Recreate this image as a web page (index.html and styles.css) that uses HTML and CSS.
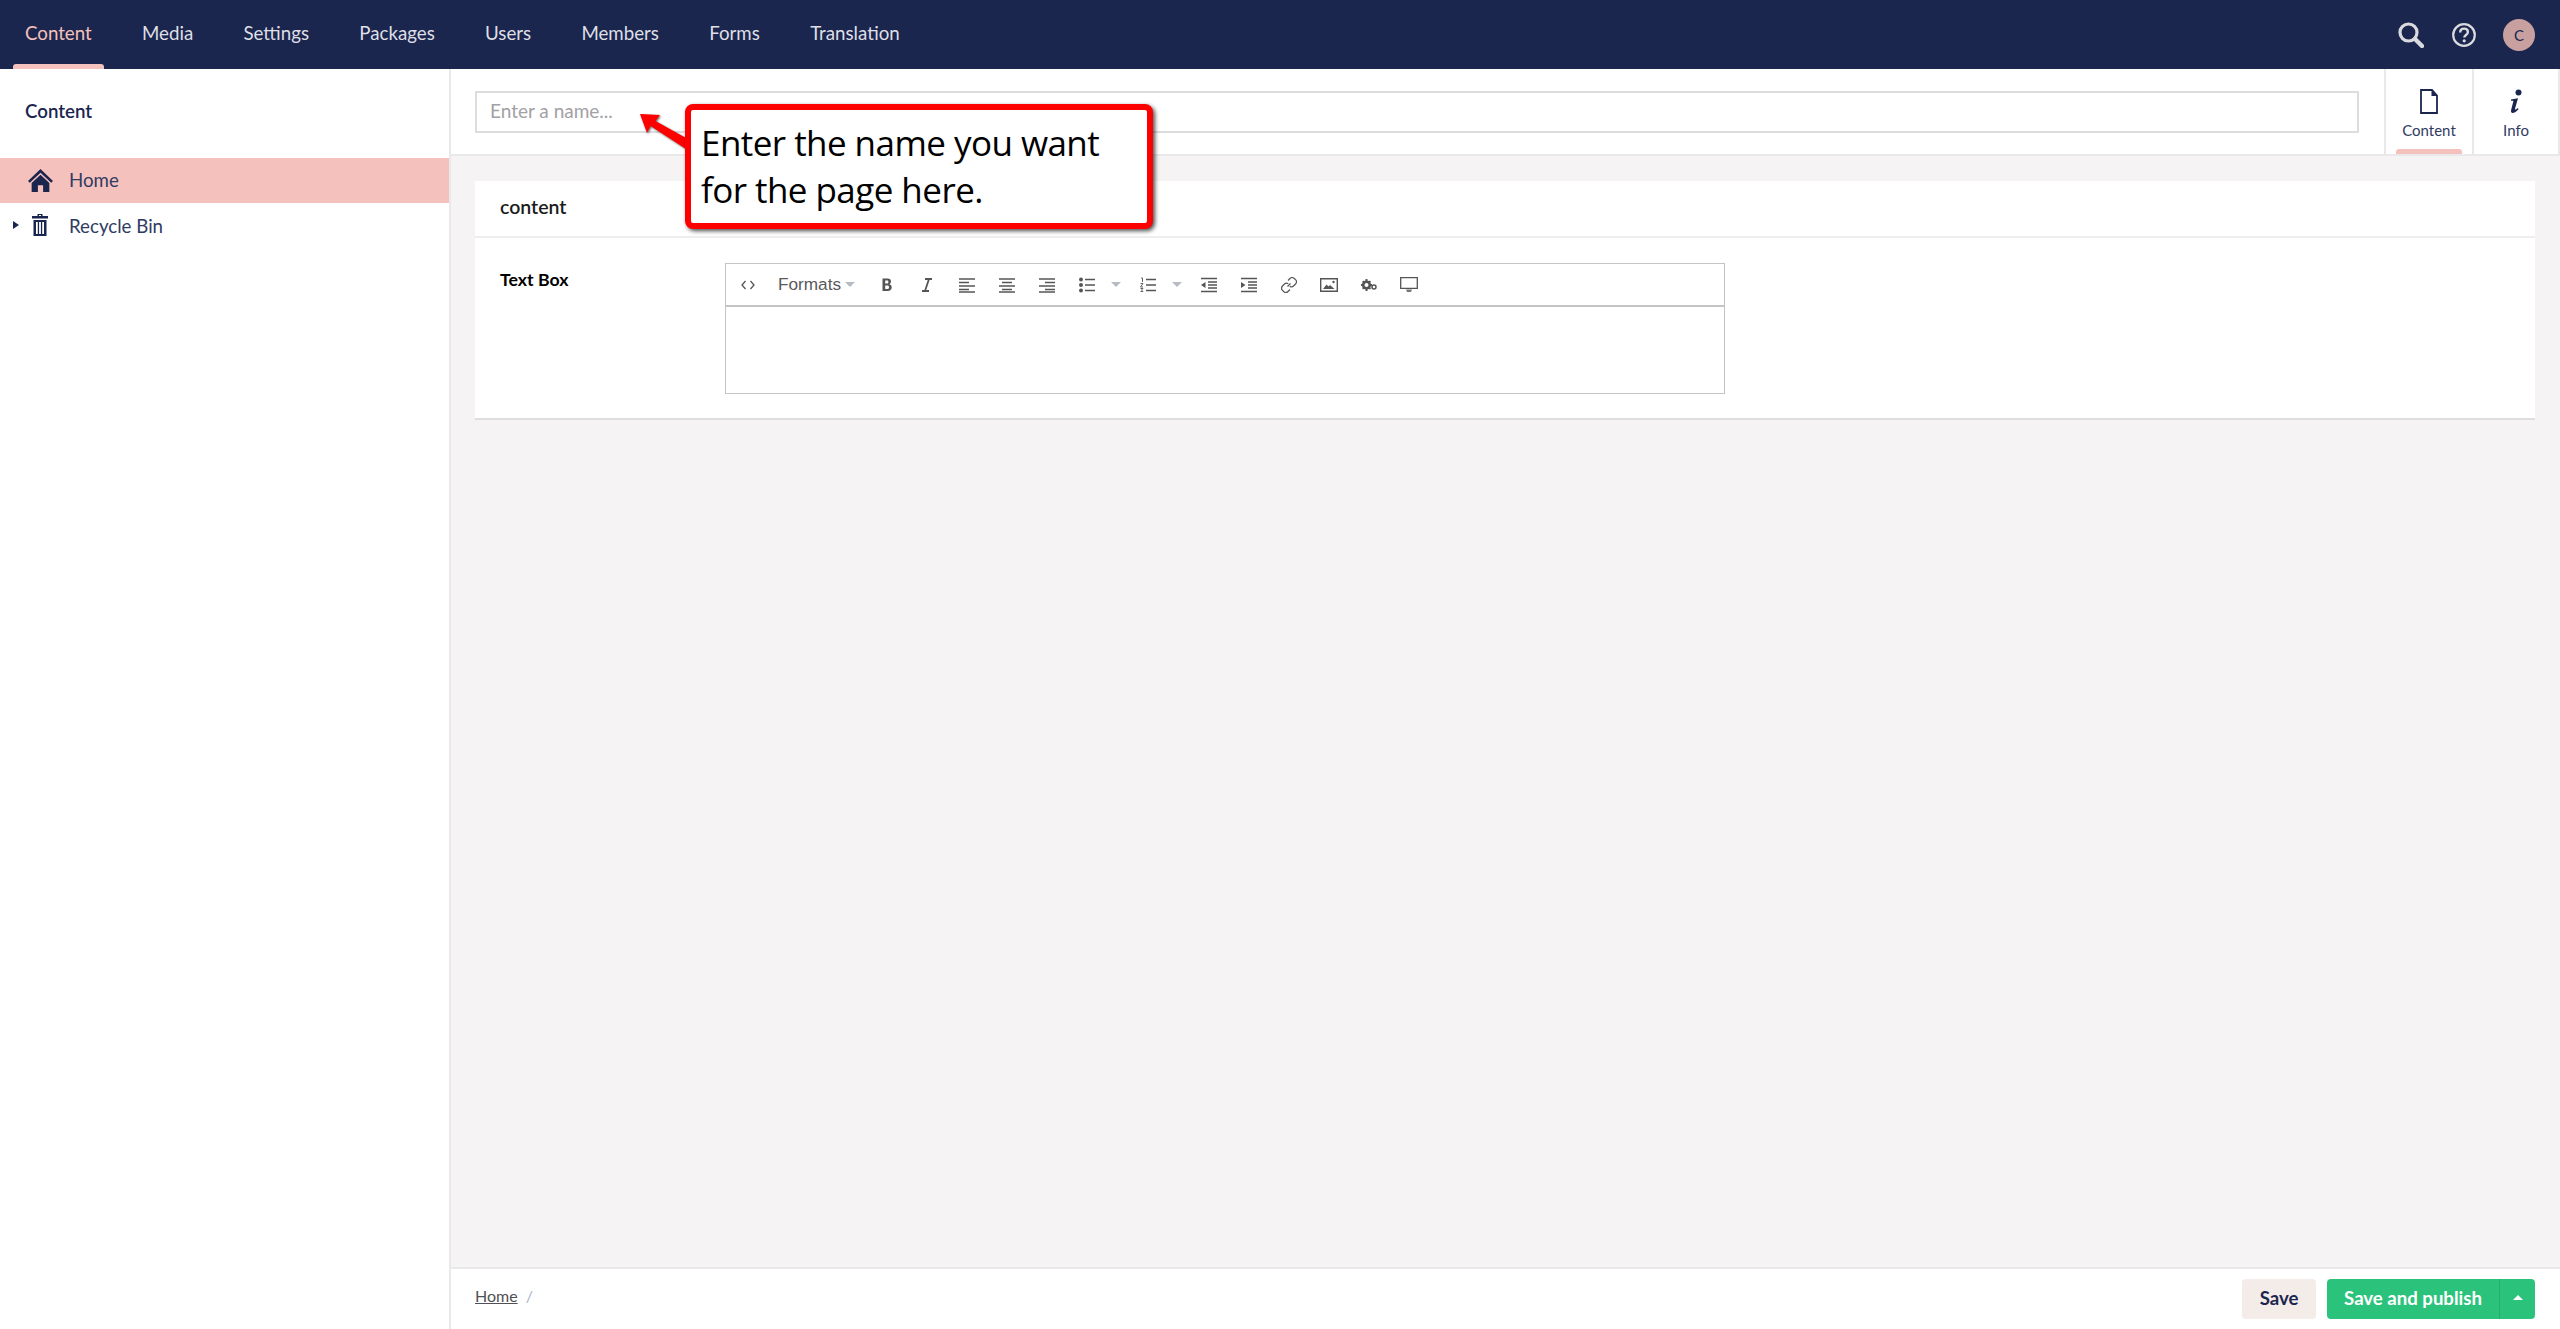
FILE: index.html
```html
<!DOCTYPE html>
<html lang="en">
<head>
    <meta charset="UTF-8">
    <title>Content</title>
    <link rel="stylesheet" href="styles.css">
</head>
<body>
    <header class="topbar">
        <nav class="sections">
            <a class="section active">Content</a>
            <a class="section">Media</a>
            <a class="section">Settings</a>
            <a class="section">Packages</a>
            <a class="section">Users</a>
            <a class="section">Members</a>
            <a class="section">Forms</a>
            <a class="section">Translation</a>
        </nav>
        <div class="top-tools">
            <svg class="tool-search" viewBox="0 0 26 26"><circle cx="10.5" cy="10.5" r="8.5" fill="none" stroke="#d9dade" stroke-width="3.2"/><path d="M17 17l7 7" stroke="#d9dade" stroke-width="4.4" stroke-linecap="round"/></svg>
            <svg class="tool-help" viewBox="0 0 24 24"><circle cx="12" cy="12" r="10.8" fill="none" stroke="#d9dade" stroke-width="2.2"/><path d="M8.2 9.4c0-2.4 1.7-3.8 3.9-3.8s3.8 1.3 3.8 3.4c0 3-3.6 3-3.6 5.6" fill="none" stroke="#d9dade" stroke-width="2.4"/><circle cx="12.2" cy="17.8" r="1.6" fill="#d9dade"/></svg>
            <div class="avatar">C</div>
        </div>
    </header>

    <div class="app">
        <aside class="tree">
            <h3 class="tree-title">Content</h3>
            <div class="tree-row selected">
                <svg class="tree-home" viewBox="0 0 24 22"><path d="M12 0L0 11.500l1.700 1.700L12 3.500l10.300 9.700 1.700-1.700zM12 5.500L3.500 13.500V22h6v-6.500h5V22h6v-8.500z" fill="#1b264f"/></svg>
                <span>Home</span>
            </div>
            <div class="tree-row">
                <span class="tree-caret"></span>
                <svg class="tree-bin" viewBox="0 0 16 22"><path d="M5.500 2V0h5v2H16v2.500H0V2zM7 1v1h2V1zM1.500 6h13v16h-13zM4 8v12h1.800V8zm3.100 0v12h1.800V8zm3.100 0v12H12V8z" fill="#1b264f" fill-rule="evenodd"/></svg>
                <span>Recycle Bin</span>
            </div>
        </aside>

        <main class="editor">
            <div class="editor-head">
                <div class="name-wrap">
                    <input class="name-input" type="text" placeholder="Enter a name...">
                </div>
                <div class="tab active">
                    <svg class="tab-icon" viewBox="0 0 18 25"><path d="M1 1h11l5 5.500V24H1z" fill="#fff" stroke="#1b264f" stroke-width="1.800"/><path d="M11.500 1v6H17z" fill="#1b264f"/></svg>
                    <span>Content</span>
                </div>
                <div class="tab">
                    <svg class="tab-icon" viewBox="0 0 18 25"><circle cx="11.500" cy="3.500" r="3" fill="#1b264f"/><path d="M4 10.500l7-1.200-3 10.500c-.3 1.200.6 1.200 2.800-.8l.7.900C8.500 24 3.500 25.800 4 21.500l2.300-9c.2-1-.8-.8-2.200-.6z" fill="#1b264f"/></svg>
                    <span>Info</span>
                </div>
            </div>

            <div class="editor-body">
                <section class="panel">
                    <div class="panel-head">content</div>
                    <div class="panel-row">
                        <label class="field-label">Text Box</label>
                        <div class="rte">
                            <div class="rte-bar">
                                <span class="btn"><svg class="ico" viewBox="0 0 16 16"><path d="M5.500 4L2 8l3.500 4M10.500 4L14 8l-3.500 4" fill="none" stroke="#555" stroke-width="1.300"/></svg></span>
                                <span class="formats">Formats<i class="caret"></i></span>
                                <span class="btn"><svg class="ico" viewBox="0 0 16 16"><path d="M3.500 1.500h5.300c2 0 3.200 1 3.200 3 0 1.200-.6 2.200-1.600 2.700 1.400.4 2.300 1.500 2.300 3.100 0 2.600-1.700 3.700-3.900 3.700H3.500zM6.200 3.500v3h2c.8 0 1.200-.6 1.200-1.500s-.4-1.500-1.200-1.500zm0 5v3.500h2.300c1 0 1.500-.7 1.500-1.800S9.500 8.500 8.500 8.500z" fill="#555" fill-rule="evenodd"/></svg></span>
                                <span class="btn"><svg class="ico" viewBox="0 0 16 16"><path d="M6 2h7M3 14h7M10 2L6 14" fill="none" stroke="#555" stroke-width="1.800"/></svg></span>
                                <span class="btn"><svg class="ico" viewBox="0 0 16 16"><path d="M0 2h16M0 5.500h10M0 9h16M0 12.500h10M0 15h16" stroke="#555" stroke-width="1.600"/></svg></span>
                                <span class="btn"><svg class="ico" viewBox="0 0 16 16"><path d="M0 2h16M3 5.500h10M0 9h16M3 12.500h10M0 15h16" stroke="#555" stroke-width="1.600"/></svg></span>
                                <span class="btn"><svg class="ico" viewBox="0 0 16 16"><path d="M0 2h16M6 5.500h10M0 9h16M6 12.500h10M0 15h16" stroke="#555" stroke-width="1.600"/></svg></span>
                                <span class="btn"><svg class="ico" viewBox="0 0 16 16"><circle cx="2" cy="2.500" r="2" fill="#555"/><circle cx="2" cy="8" r="2" fill="#555"/><circle cx="2" cy="13.500" r="2" fill="#555"/><path d="M6 2.500h10M6 8h10M6 13.500h10" stroke="#555" stroke-width="1.700"/></svg></span>
                                <span class="btn-caret"><i class="caret"></i></span>
                                <span class="btn"><svg class="ico" viewBox="0 0 16 16"><path d="M1 1h1.500v4M.5 6.500h2.500L.5 10h2.500M.5 11.500h2.500L1.500 13l1.500 1.500H.5" fill="none" stroke="#555" stroke-width=".9"/><path d="M6 2.500h10M6 8h10M6 13.500h10" stroke="#555" stroke-width="1.700"/></svg></span>
                                <span class="btn-caret"><i class="caret"></i></span>
                                <span class="btn"><svg class="ico" viewBox="0 0 16 16"><path d="M0 1.500h16M7 5h9M7 8h9M7 11h9M0 14.500h16" stroke="#555" stroke-width="1.600"/><path d="M4.500 5v6L0 8z" fill="#555"/></svg></span>
                                <span class="btn"><svg class="ico" viewBox="0 0 16 16"><path d="M0 1.500h16M7 5h9M7 8h9M7 11h9M0 14.500h16" stroke="#555" stroke-width="1.600"/><path d="M0 5v6l4.500-3z" fill="#555"/></svg></span>
                                <span class="btn"><svg class="ico" viewBox="0 0 16 16"><path d="M6.500 9.500l3-3M7 3.500l2-2c1.200-1.200 3-1.200 4.300 0l1.200 1.200c1.200 1.200 1.200 3 0 4.300l-2 2c-1 1-2.600 1.100-3.700.2M9 12.500l-2 2c-1.200 1.200-3 1.200-4.300 0l-1.200-1.200c-1.200-1.200-1.200-3 0-4.300l2-2c1-1 2.600-1.100 3.700-.2" fill="none" stroke="#555" stroke-width="1.200"/></svg></span>
                                <span class="btn"><svg class="ico-wide" viewBox="0 0 18 14"><path d="M.7.700h16.600v12.600H.7z" fill="none" stroke="#555" stroke-width="1.400"/><path d="M3 11l3.500-4.500 2 2 1.500-1.500 4.500 4z" fill="#555"/><circle cx="13.500" cy="4" r="1.200" fill="#555"/></svg></span>
                                <span class="btn"><svg class="ico" viewBox="0 0 16 16"><circle cx="5.500" cy="8" r="3.300" fill="none" stroke="#555" stroke-width="2.600"/><path d="M5.500 2v2M5.500 12v2M0 8h2M9 8h2M1.700 4.200l1.400 1.400M8 10.500l1.400 1.400M1.700 11.800l1.400-1.400M8 5.500l1.400-1.400" stroke="#555" stroke-width="2"/><circle cx="13" cy="10" r="2" fill="none" stroke="#555" stroke-width="1.500"/></svg></span>
                                <span class="btn"><svg class="ico-wide" viewBox="0 0 18 16"><path d="M.7.700h16.600v10.600H.7z" fill="none" stroke="#555" stroke-width="1.300"/><path d="M6 12.500h6l-1 2.500H7z" fill="#777"/></svg></span>
                            </div>
                            <div class="rte-body"></div>
                        </div>
                    </div>
                </section>
            </div>

            <footer class="editor-foot">
                <div class="crumbs"><a class="crumb">Home</a><span class="crumb-sep">/</span></div>
                <div class="actions">
                    <button class="btn-save">Save</button>
                    <div class="publish">
                        <button class="btn-publish">Save and publish</button>
                        <button class="btn-more"><i class="caret-up"></i></button>
                    </div>
                </div>
            </footer>
        </main>
    </div>

    <!-- annotation drawn on top of the screenshot -->
    <svg class="callout-arrow" viewBox="0 0 60 45"><path d="M0 1L20 2l-4.500 6L46 25v11L10.500 13 7 20z" fill="#f00"/></svg>
    <div class="callout">Enter the name you want for the page here.</div>
</body>
</html>
```

FILE: styles.css
```css
* {
    margin: 0;
    padding: 0;
    box-sizing: border-box;
}

body {
    font-family: Lato, Arial, sans-serif;
    font-size: 16px;
    color: #1b264f;
    height: 100vh;
    display: flex;
    flex-direction: column;
    overflow: hidden;
    background: white;
}

svg {
    display: block;
}

/* top bar */
.topbar {
    height: 69px;
    background: #1b264f;
    display: flex;
    justify-content: space-between;
    flex-shrink: 0;
}

.sections {
    display: flex;
    padding-left: 13px;
}

.section {
    position: relative;
    padding: 0 12px;
    margin-right: 26.3px;
    line-height: 66px;
    font-size: 18.7px;
    color: #dfdfe5;
}

.section.active {
    color: #f5c1bc;
}

.section.active::after {
    content: "";
    position: absolute;
    left: 0;
    right: 0;
    bottom: 0;
    height: 5px;
    background: #f5c1bc;
    border-radius: 3px 3px 0 0;
}

.top-tools {
    display: flex;
    align-items: center;
    padding-right: 25px;
}

.tool-search {
    width: 26px;
    height: 26px;
    margin-right: 28px;
}

.tool-help {
    width: 24px;
    height: 24px;
    margin-right: 27px;
}

.avatar {
    width: 32px;
    height: 32px;
    border-radius: 50%;
    background: #c9a0a0;
    color: #1b264f;
    font-size: 15px;
    line-height: 32px;
    text-align: center;
}

/* layout */
.app {
    flex: 1;
    display: flex;
    min-height: 0;
}

.tree {
    width: 451px;
    flex-shrink: 0;
    border-right: 2px solid #e9e9eb;
}

.tree-title {
    font-size: 18.7px;
    font-weight: 600;
    line-height: 22px;
    padding: 31px 0 36px 25px;
}

.tree-row {
    position: relative;
    height: 45px;
    display: flex;
    align-items: center;
    padding-left: 69px;
    font-size: 18.7px;
    color: #303b63;
}

.tree-row.selected {
    background: #f5c1bc;
    padding-bottom: 2px;
}

.tree-home {
    position: absolute;
    left: 28px;
    top: 11px;
    width: 25px;
    height: 23px;
}

.tree-bin {
    position: absolute;
    left: 32px;
    top: 11px;
    width: 16px;
    height: 22px;
}

.tree-caret {
    position: absolute;
    left: 13px;
    top: 18px;
    border-left: 6px solid #1b264f;
    border-top: 4px solid transparent;
    border-bottom: 4px solid transparent;
}

.editor {
    flex: 1;
    display: flex;
    flex-direction: column;
    min-width: 0;
    background: #f5f3f4;
}

/* name + tabs */
.editor-head {
    height: 87px;
    background: white;
    border-bottom: 2px solid #e9e9eb;
    display: flex;
    flex-shrink: 0;
}

.name-wrap {
    flex: 1;
    padding: 22px 25px 0 24px;
}

.name-input {
    width: 100%;
    height: 42px;
    padding: 0 13px 4px;
    border: 2px solid #dddcde;
    font-family: inherit;
    font-size: 19px;
    outline: none;
}

.name-input::placeholder {
    color: #a2a1a6;
}

.tab {
    position: relative;
    width: 88px;
    border-left: 2px solid #e9e9eb;
    display: flex;
    flex-direction: column;
    align-items: center;
    padding-top: 20px;
    font-size: 15px;
    color: #303b63;
}

.tab:last-child {
    border-right: 2px solid #e9e9eb;
}

.tab-icon {
    width: 18px;
    height: 25px;
    margin-bottom: 7px;
}

.tab.active::after {
    content: "";
    position: absolute;
    left: 10px;
    right: 10px;
    bottom: 0;
    height: 5px;
    background: #f5c1bc;
    border-radius: 3px 3px 0 0;
}

/* content panel */
.editor-body {
    flex: 1;
    padding: 25px 25px 0 24px;
}

.panel {
    background: white;
    border-bottom: 2px solid #dedede;
    height: 239px;
}

.panel-head {
    height: 57px;
    padding-left: 25px;
    line-height: 52px;
    font-size: 19.5px;
    font-weight: 600;
    color: #1b1b1b;
    border-bottom: 2px solid #eeeeee;
}

.panel-row {
    display: flex;
    padding: 25px 0 0 25px;
}

.field-label {
    width: 225px;
    flex-shrink: 0;
    font-size: 17.7px;
    font-weight: 700;
    line-height: 22px;
    color: black;
    padding-top: 6px;
}

/* rich text editor */
.rte {
    width: 1000px;
    border: 1px solid #c4c4c4;
}

.rte-bar {
    height: 43px;
    display: flex;
    align-items: center;
    padding-left: 2px;
    border-bottom: 2px solid #c4c4c4;
}

.rte-body {
    height: 86px;
}

.btn {
    width: 40px;
    height: 100%;
    display: flex;
    align-items: center;
    justify-content: center;
}

.btn-caret {
    width: 21px;
    display: flex;
    align-items: center;
}

.ico {
    width: 16px;
    height: 16px;
}

.ico-wide {
    width: 18px;
    height: 16px;
}

.formats {
    display: flex;
    align-items: center;
    width: 99px;
    padding-left: 10px;
    font-family: "Liberation Sans", Arial, sans-serif;
    font-size: 17.2px;
    color: #595959;
}

.caret {
    display: inline-block;
    margin-left: 4px;
    border-top: 5px solid #b7bcc2;
    border-left: 5px solid transparent;
    border-right: 5px solid transparent;
}

/* footer */
.editor-foot {
    height: 62px;
    flex-shrink: 0;
    background: white;
    border-top: 2px solid #e9e9eb;
    display: flex;
    justify-content: space-between;
    align-items: center;
    padding: 0 25px 0 24px;
}

.crumbs {
    display: flex;
    font-size: 16px;
    color: #515054;
    margin-bottom: 8px;
}

.crumb {
    text-decoration: underline;
}

.crumb-sep {
    margin-left: 8px;
    color: #a9b4cc;
}

.actions {
    display: flex;
    gap: 11px;
}

.btn-save,
.btn-publish,
.btn-more {
    border: none;
    height: 40px;
    padding-bottom: 3px;
    font-family: inherit;
    font-size: 18.6px;
    font-weight: 700;
}

.btn-save {
    width: 74px;
    background: #f3ece9;
    color: #1b264f;
    border-radius: 4px;
}

.publish {
    display: flex;
}

.btn-publish {
    width: 172px;
    background: #2bc37c;
    color: white;
    border-radius: 4px 0 0 4px;
}

.btn-more {
    width: 36px;
    background: #2bc37c;
    border-left: 1px solid #25ad6d;
    border-radius: 0 4px 4px 0;
    display: flex;
    align-items: center;
    justify-content: center;
}

.caret-up {
    border-bottom: 5px solid white;
    border-left: 5px solid transparent;
    border-right: 5px solid transparent;
}

/* annotation */
.callout {
    position: absolute;
    left: 685px;
    top: 104px;
    width: 468px;
    height: 125px;
    padding: 9px 10px;
    background: white;
    border: 6px solid #f00;
    border-radius: 8px;
    box-shadow: 2px 2px 4px rgba(0, 0, 0, 0.7);
    font-family: "Open Sans", sans-serif;
    font-size: 35px;
    letter-spacing: -0.55px;
    line-height: 47px;
    color: black;
}

.callout-arrow {
    position: absolute;
    left: 640px;
    top: 113px;
    width: 60px;
    height: 45px;
    filter: drop-shadow(1px 1px 1px rgba(0, 0, 0, 0.6));
}
```
